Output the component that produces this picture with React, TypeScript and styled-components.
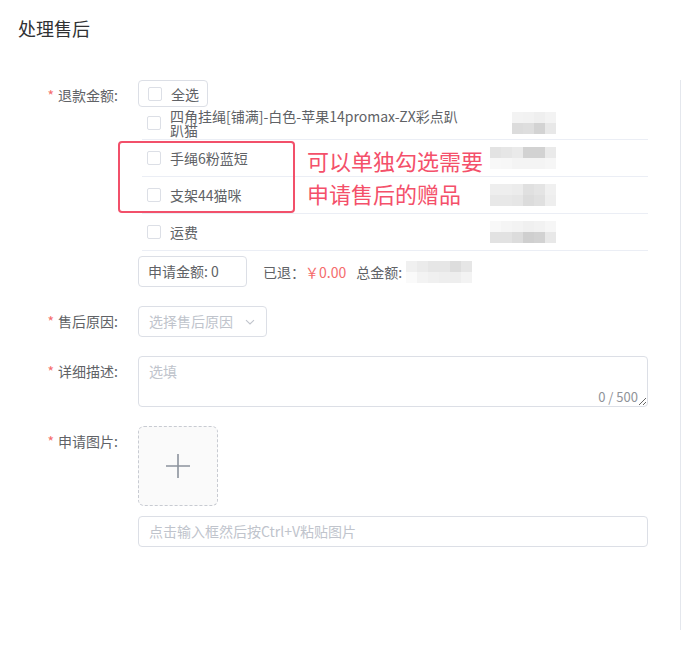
import React from 'react';
import styled, { createGlobalStyle } from 'styled-components';

const GlobalStyle = createGlobalStyle`
  body {
    margin: 0;
    background: #ffffff;
    font-family: "Noto Sans CJK SC", "Noto Sans", sans-serif;
    color: #606266;
  }
  * {
    box-sizing: border-box;
  }
`;

const Page = styled.div`
  width: 687px;
  height: 667px;
  padding-top: 16px;
  background: #fff;
  overflow: hidden;
`;

const Title = styled.div`
  padding-left: 18px;
  height: 24px;
  line-height: 24px;
  font-size: 18px;
  color: #303133;
  margin-bottom: 40px;
`;

const Panel = styled.div`
  width: 681px;
  height: 550px;
  border-right: 1px solid #e4e7ed;
  display: flex;
  flex-direction: column;
`;

const FormItem = styled.div<{ $gap?: number }>`
  display: flex;
  align-items: flex-start;
  margin-top: ${(p) => p.$gap ?? 0}px;
`;

const Label = styled.div<{ $lh?: number }>`
  width: 118px;
  flex-shrink: 0;
  text-align: right;
  font-size: 14px;
  line-height: ${(p) => p.$lh ?? 31}px;
  color: #606266;
  white-space: nowrap;

  .star {
    color: #f56c6c;
    margin-right: 4px;
  }
`;

const Control = styled.div`
  margin-left: 20px;
  width: 510px;
  display: flex;
  flex-direction: column;
`;

const Box = styled.span`
  display: inline-block;
  width: 14px;
  height: 14px;
  flex-shrink: 0;
  border: 1px solid #dcdfe6;
  border-radius: 2px;
  background: #fff;
`;

const SelectAll = styled.label`
  align-self: flex-start;
  display: inline-flex;
  align-items: center;
  gap: 9px;
  height: 27px;
  padding: 0 8px 0 9px;
  border: 1px solid #dcdfe6;
  border-radius: 4px;
  font-size: 14px;
  color: #606266;
`;

const List = styled.div`
  position: relative;
  margin-left: 4px;
  width: 506px;
`;

const Row = styled.div<{ $tight?: boolean }>`
  display: flex;
  align-items: center;
  min-height: ${(p) => (p.$tight ? 32 : 37)}px;
  padding: ${(p) => (p.$tight ? '2px 0 2px 5px' : '0 0 0 5px')};
  border-bottom: 1px solid #ebeef5;
`;

const ItemName = styled.div`
  width: 300px;
  margin-left: 9px;
  font-size: 14px;
  line-height: 14px;
  color: #606266;
`;

const PriceCell = styled.div`
  width: 66px;
  margin-left: 20px;
  display: flex;
  justify-content: flex-end;
`;

const MosaicGrid = styled.div<{ $cols: number }>`
  display: grid;
  grid-template-columns: repeat(${(p) => p.$cols}, 11px);
  grid-auto-rows: 11px;
`;

const Callout = styled.div`
  position: absolute;
  left: -24px;
  top: 34px;
  width: 177px;
  height: 72px;
  border: 2px solid #f2506a;
  border-radius: 4px;
`;

const CalloutText = styled.div`
  position: absolute;
  left: 165px;
  top: 37px;
  font-size: 22px;
  line-height: 33px;
  color: #f4506a;
  white-space: nowrap;
`;

const AmountLine = styled.div`
  display: flex;
  align-items: center;
  margin-top: 5px;
  font-size: 14px;
  color: #606266;
`;

const Input = styled.div<{ $w?: number; $placeholder?: boolean }>`
  width: ${(p) => (p.$w ? `${p.$w}px` : '100%')};
  height: 31px;
  line-height: 29px;
  padding: 0 10px 0 ${(p) => (p.$placeholder ? 10 : 9)}px;
  border: 1px solid #dcdfe6;
  border-radius: 4px;
  font-size: 14px;
  color: ${(p) => (p.$placeholder ? '#c0c4cc' : '#606266')};
  display: flex;
  align-items: center;
  justify-content: space-between;
  white-space: nowrap;
`;

const Refunded = styled.span`
  margin-left: 16px;
`;

const Money = styled.span`
  color: #f56c6c;
  margin-right: 10px;
`;

const TotalLabel = styled.span`
  margin-right: 4px;
`;

const TextAreaWrap = styled.div`
  position: relative;
  width: 510px;
  height: 51px;
`;

const TextArea = styled.textarea`
  display: block;
  width: 100%;
  height: 100%;
  padding: 4px 10px;
  border: 1px solid #dcdfe6;
  border-radius: 4px;
  font-family: inherit;
  font-size: 14px;
  line-height: 20px;
  color: #606266;
  resize: vertical;
  outline: none;

  &::placeholder {
    color: #c0c4cc;
  }
`;

const Counter = styled.span`
  position: absolute;
  right: 10px;
  bottom: 2px;
  font-size: 13px;
  line-height: 16px;
  color: #909399;
`;

const Upload = styled.div`
  width: 80px;
  height: 80px;
  border: 1px dashed #c8cbd2;
  border-radius: 6px;
  background: #fafafa;
  display: flex;
  align-items: center;
  justify-content: center;
`;

const PasteInput = styled(Input)`
  margin-top: 10px;
`;

const shades: Record<string, string[]> = {
  r1: ['#f3f3f3', '#f2f2f2', '#efefef', '#f3f3f3', '#dcdcdc', '#dedede', '#d3d3d3', '#e8e8e8'],
  r2: ['#e3e3e3', '#e6e6e6', '#eaeaea', '#d2d2d2', '#d2d2d2', '#eaeaea', '#f8f8f8', '#f7f7f7', '#f4f4f4', '#f4f4f4', '#f4f4f4', '#f6f6f6'],
  r3: ['#eeeeee', '#eeeeee', '#ececec', '#e0e0e0', '#e4e4e4', '#f0f0f0', '#e8e8e8', '#e8e8e8', '#e6e6e6', '#dcdcdc', '#e0e0e0', '#eeeeee'],
  r4: ['#f8f8f8', '#f5f5f5', '#f3f3f3', '#f0f0f0', '#f2f2f2', '#f6f6f6', '#e2e2e2', '#e2e2e2', '#dcdcdc', '#cfcfcf', '#d2d2d2', '#e8e8e8'],
  total: ['#f0f0f0', '#ebebeb', '#e6e6e6', '#e6e6e6', '#dddddd', '#e6e6e6', '#fafafa', '#f3f3f3', '#f0f0f0', '#eeeeee', '#eeeeee', '#f3f3f3'],
};

const Mosaic = ({ id, cols }: { id: string; cols: number }) => (
  <MosaicGrid $cols={cols}>
    {shades[id].map((c, i) => (
      <span key={i} style={{ background: c }} />
    ))}
  </MosaicGrid>
);

const Chevron = () => (
  <svg width="12" height="12" viewBox="0 0 12 12" fill="none">
    <path d="M2 4.2 L6 8 L10 4.2" stroke="#c0c4cc" strokeWidth="1.1" />
  </svg>
);

const Plus = () => (
  <svg width="26" height="26" viewBox="0 0 26 26" fill="none">
    <path d="M13 1 V25 M1 13 H25" stroke="#8c939d" strokeWidth="1.6" />
  </svg>
);

const items = [
  { name: '四角挂绳[铺满]-白色-苹果14promax-ZX彩点趴趴猫', price: 'r1', cols: 4, tight: true },
  { name: '手绳6粉蓝短', price: 'r2', cols: 6 },
  { name: '支架44猫咪', price: 'r3', cols: 6 },
  { name: '运费', price: 'r4', cols: 6 },
];

export default function App() {
  return (
    <Page>
      <GlobalStyle />
      <Title>处理售后</Title>
      <Panel>
        <FormItem>
          <Label $lh={31}>
            <span className="star">*</span>退款金额:
          </Label>
          <Control>
            <SelectAll>
              <Box />
              全选
            </SelectAll>
            <List>
              {items.map((it) => (
                <Row key={it.name} $tight={it.tight}>
                  <Box />
                  <ItemName>{it.name}</ItemName>
                  <PriceCell>
                    <Mosaic id={it.price} cols={it.cols} />
                  </PriceCell>
                </Row>
              ))}
              <Callout />
              <CalloutText>
                可以单独勾选需要
                <br />
                申请售后的赠品
              </CalloutText>
            </List>
            <AmountLine>
              <Input $w={109}>申请金额: 0</Input>
              <Refunded>已退：</Refunded>
              <Money>￥0.00</Money>
              <TotalLabel>总金额:</TotalLabel>
              <Mosaic id="total" cols={6} />
            </AmountLine>
          </Control>
        </FormItem>

        <FormItem $gap={19}>
          <Label>
            <span className="star">*</span>售后原因:
          </Label>
          <Control>
            <Input $w={129} $placeholder>
              选择售后原因
              <Chevron />
            </Input>
          </Control>
        </FormItem>

        <FormItem $gap={19}>
          <Label>
            <span className="star">*</span>详细描述:
          </Label>
          <Control>
            <TextAreaWrap>
              <TextArea placeholder="选填" />
              <Counter>0 / 500</Counter>
            </TextAreaWrap>
          </Control>
        </FormItem>

        <FormItem $gap={19}>
          <Label>
            <span className="star">*</span>申请图片:
          </Label>
          <Control>
            <Upload>
              <Plus />
            </Upload>
            <PasteInput $placeholder>点击输入框然后按Ctrl+V粘贴图片</PasteInput>
          </Control>
        </FormItem>
      </Panel>
    </Page>
  );
}
